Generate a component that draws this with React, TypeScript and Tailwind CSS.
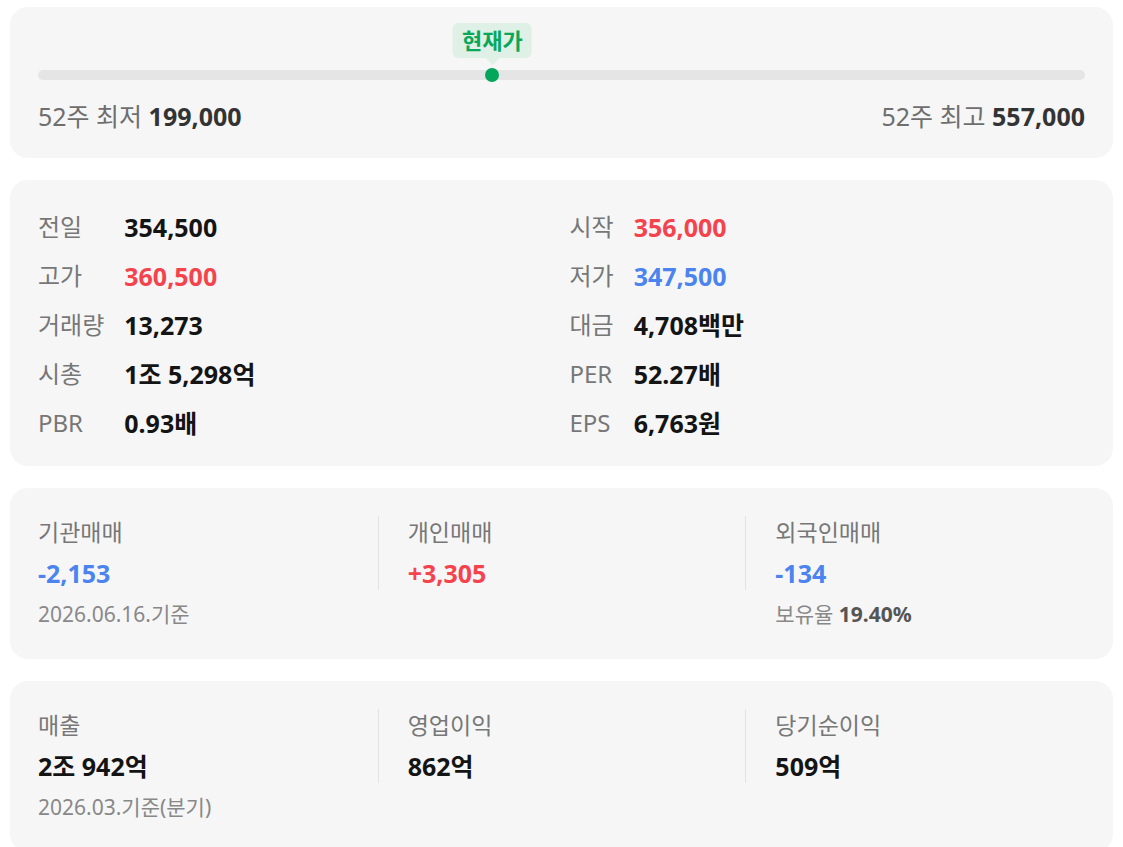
import React from "react";

type Tone = "up" | "down" | "plain";

interface StatItem {
  label: string;
  value: string;
  tone?: Tone;
}

const LEFT_STATS: StatItem[] = [
  { label: "전일", value: "354,500" },
  { label: "고가", value: "360,500", tone: "up" },
  { label: "거래량", value: "13,273" },
  { label: "시총", value: "1조 5,298억" },
  { label: "PBR", value: "0.93배" },
];

const RIGHT_STATS: StatItem[] = [
  { label: "시작", value: "356,000", tone: "up" },
  { label: "저가", value: "347,500", tone: "down" },
  { label: "대금", value: "4,708백만" },
  { label: "PER", value: "52.27배" },
  { label: "EPS", value: "6,763원" },
];

const toneClass = (tone: Tone = "plain") => {
  if (tone === "up") return "text-[#f5434d]";
  if (tone === "down") return "text-[#4b84ee]";
  return "text-[#141414]";
};

const StatColumn: React.FC<{ items: StatItem[] }> = ({ items }) => (
  <div className="grid grid-cols-[auto_1fr] gap-x-[20px] gap-y-[15px]">
    {items.map((item) => (
      <React.Fragment key={item.label}>
        <div className="text-[24px] leading-[34px] text-[#777]">{item.label}</div>
        <div className={`text-[25px] leading-[34px] font-bold ${toneClass(item.tone)}`}>{item.value}</div>
      </React.Fragment>
    ))}
  </div>
);

interface FlowItem {
  label: string;
  value: string;
  tone?: Tone;
  sub?: React.ReactNode;
}

const FlowCard: React.FC<{ items: FlowItem[] }> = ({ items }) => (
  <div className="rounded-[18px] bg-[#f6f6f6] pt-[28px] pb-[31px] grid grid-cols-3">
    {items.map((item, i) => (
      <div key={item.label} className="flex flex-col">
        <div className={i === 0 ? "pl-[28px]" : "border-l border-[#e3e3e3] pl-[29px]"}>
          <div className="text-[23px] leading-[32px] text-[#777]">{item.label}</div>
          <div className={`mt-2 text-[25px] leading-[34px] font-bold ${toneClass(item.tone)}`}>{item.value}</div>
        </div>
        {item.sub && (
          <div className={`mt-[10px] text-[21px] leading-[28px] text-[#888] ${i === 0 ? "pl-[28px]" : "pl-[30px]"}`}>
            {item.sub}
          </div>
        )}
      </div>
    ))}
  </div>
);

export default function App() {
  return (
    <div className="min-h-screen bg-white px-[10px] pt-[7px] pb-4 flex flex-col gap-[22px] font-['Noto_Sans','Noto_Sans_CJK_KR',sans-serif]">
      {/* 52주 범위 */}
      <div className="rounded-[18px] bg-[#f6f6f6] px-[28px] pt-[16px] pb-[25px]">
        <div className="relative h-[47px]">
          <div className="absolute left-[43.4%] top-0 -translate-x-1/2 flex flex-col items-center">
            <div className="h-[35px] px-[9px] rounded-[6px] bg-[#dff0e6] text-[#0aa75b] text-[22px] font-bold leading-[35px] whitespace-nowrap">
              현재가
            </div>
            <div className="w-0 h-0 border-l-[7px] border-r-[7px] border-t-[7px] border-l-transparent border-r-transparent border-t-[#dff0e6]" />
          </div>
        </div>
        <div className="relative h-[10px] rounded-full bg-[#e5e5e5]">
          <div className="absolute left-[43.4%] top-1/2 -translate-x-1/2 -translate-y-1/2 w-[14px] h-[14px] rounded-full bg-[#03a65a]" />
        </div>
        <div className="mt-[19px] flex justify-between text-[25px] leading-[34px]">
          <div className="text-[#6e6e6e]">
            52주 최저 <span className="font-bold text-[#333]">199,000</span>
          </div>
          <div className="text-[#6e6e6e]">
            52주 최고 <span className="font-bold text-[#333]">557,000</span>
          </div>
        </div>
      </div>

      {/* 시세 */}
      <div className="rounded-[18px] bg-[#f6f6f6] px-[28px] pt-[30px] pb-[26px] grid grid-cols-2 gap-x-4">
        <StatColumn items={LEFT_STATS} />
        <StatColumn items={RIGHT_STATS} />
      </div>

      {/* 투자자별 매매 */}
      <FlowCard
        items={[
          { label: "기관매매", value: "-2,153", tone: "down", sub: "2026.06.16.기준" },
          { label: "개인매매", value: "+3,305", tone: "up" },
          {
            label: "외국인매매",
            value: "-134",
            tone: "down",
            sub: (
              <>
                보유율 <span className="font-bold text-[#555]">19.40%</span>
              </>
            ),
          },
        ]}
      />

      {/* 실적 */}
      <FlowCard
        items={[
          { label: "매출", value: "2조 942억", sub: "2026.03.기준(분기)" },
          { label: "영업이익", value: "862억" },
          { label: "당기순이익", value: "509억" },
        ]}
      />
    </div>
  );
}
